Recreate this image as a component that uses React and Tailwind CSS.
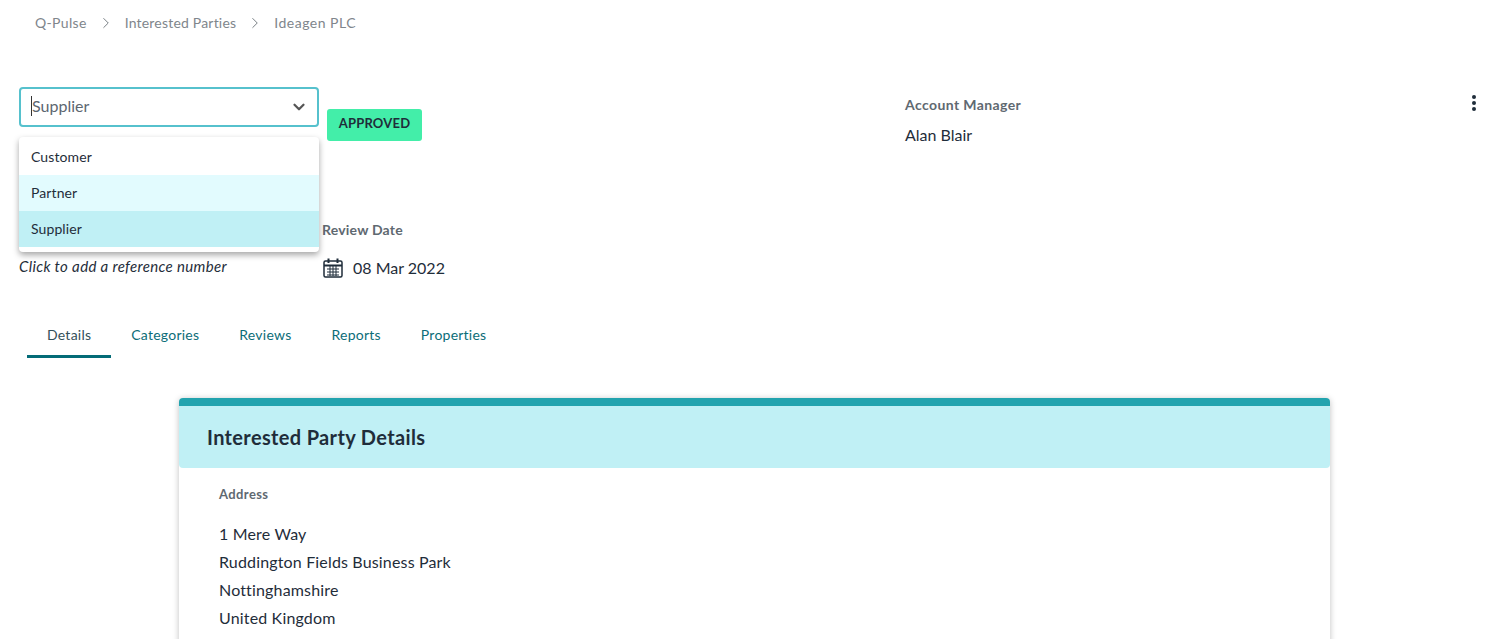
import React from 'react';
import { ChevronDown, ChevronRight } from 'lucide-react';

const tabs = ['Details', 'Categories', 'Reviews', 'Reports', 'Properties'];
const address = ['1 Mere Way', 'Ruddington Fields Business Park', 'Nottinghamshire', 'United Kingdom'];

const CalendarIcon = () => (
  <svg width="22" height="22" viewBox="0 0 22 22" fill="none" stroke="#1f2d3a" strokeWidth="1.5">
    <rect x="2" y="4" width="18" height="16" rx="1.5" />
    <path d="M2 8.5h18M6.5 1.5v4.5M15.500 1.500v4.500" strokeWidth="2" />
    <path d="M5 12h12M5 15h12M5 18h12M8 9v10M11 9v10M14 9v10" strokeWidth="1" />
  </svg>
);

export default function App() {
  return (
    <div className="h-[639px] overflow-hidden bg-white text-[#1f2d3a] font-['Lato','Liberation_Sans',sans-serif]">
      {/* Breadcrumb */}
      <nav className="flex items-center h-[45px] pl-[35px] text-[14px] tracking-[0.2px] text-[#80868c]">
        <span className="tracking-[0.33px]">Q-Pulse</span>
        <ChevronRight className="w-[18px] h-[18px] mx-[10px] text-[#6f767c]" strokeWidth={1.25} />
        <span>Interested Parties</span>
        <ChevronRight className="w-[18px] h-[18px] mx-[10px] text-[#6f767c]" strokeWidth={1.25} />
        <span className="tracking-[0.5px]">Ideagen PLC</span>
      </nav>

      {/* Header */}
      <section className="flex pt-[42px] pl-[19px] pr-[20px]">
        <div className="relative w-[300px] h-[40px] shrink-0">
          <div className="flex items-center justify-between h-[40px] pl-[10px] pr-[9px] pb-[2px] rounded-[4px] border-2 border-[#56c1cd] text-[16px] text-[#5c6670]">
            <span className="border-l border-[#333] leading-[20px]">Supplier</span>
            <ChevronDown className="w-[18px] h-[18px] mt-[2px] text-[#555]" strokeWidth={3} />
          </div>
          <ul className="absolute left-0 right-0 top-[50px] z-10 h-[115px] pt-[2px] rounded-[4px] bg-white text-[14px] tracking-[0.1px] shadow-[0_3px_6px_rgba(0,0,0,0.35)]">
            <li className="flex items-center h-[36px] px-[12px] pb-[2px]">Customer</li>
            <li className="flex items-center h-[36px] px-[12px] pb-[2px] bg-[#e2fbfe]">Partner</li>
            <li className="flex items-center h-[36px] px-[12px] pb-[2px] bg-[#c0f0f5]">Supplier</li>
          </ul>
        </div>
        <div className="w-[586px] pl-[8px] pt-[22px]">
          <span className="inline-flex items-center justify-center w-[95px] h-[32px] pb-[3px] rounded-[3px] bg-[#43eea9] text-[13px] font-bold tracking-[0.2px]">APPROVED</span>
        </div>
        <div className="flex-1 pt-[7px]">
          <div className="text-[14px] font-bold tracking-[0.4px] text-[#5f6971]">Account Manager</div>
          <div className="mt-[8px] text-[16px]">Alan Blair</div>
        </div>
        <div className="flex flex-col gap-[2px] pt-[8px] pr-[4px]">
          <span className="w-[4px] h-[4px] rounded-full bg-[#1f2d3a]" />
          <span className="w-[4px] h-[4px] rounded-full bg-[#1f2d3a]" />
          <span className="w-[4px] h-[4px] rounded-full bg-[#1f2d3a]" />
        </div>
      </section>

      {/* Reference and review date */}
      <section className="flex mt-[72px] pl-[19px]">
        <div className="w-[303px] pt-[36px] text-[15px] tracking-[0.35px] italic">Click to add a reference number</div>
        <div>
          <div className="text-[14px] font-bold tracking-[0.2px] text-[#5f6971]">Review Date</div>
          <div className="flex items-center gap-[9px] mt-[16px] text-[16px]">
            <CalendarIcon />
            <span>08 Mar 2022</span>
          </div>
        </div>
      </section>

      {/* Tabs */}
      <div className="flex mt-[33px] pl-[27px] text-[14px] tracking-[0.24px] text-[#0c6d78]">
        {tabs.map((tab, i) => (
          <div
            key={tab}
            className={`flex items-center h-[45px] px-[20px] ${i === 0 ? 'border-b-[3px] border-[#036b77] text-[#33505a]' : 'pb-[3px]'}`}
          >
            {tab}
          </div>
        ))}
      </div>

      {/* Details card */}
      <div className="mt-[40px] ml-[179px] w-[1151px] rounded-t-[4px] bg-white shadow-[0_1px_6px_rgba(0,0,0,0.25)]">
        <div className="h-[70px] rounded-[4px] border-t-[8px] border-[#22a3ae] bg-[#c0f0f5] pl-[28px] flex items-center">
          <h2 className="text-[20px] font-bold tracking-[0.35px]">Interested Party Details</h2>
        </div>
        <div className="pl-[40px] pt-[17px] pb-[40px]">
          <div className="text-[13px] font-bold tracking-[0.4px] text-[#5f6971]">Address</div>
          <div className="mt-[15px] text-[16px] tracking-[0.16px] leading-[28px]">
            {address.map((line) => (
              <div key={line}>{line}</div>
            ))}
          </div>
        </div>
      </div>
    </div>
  );
}
